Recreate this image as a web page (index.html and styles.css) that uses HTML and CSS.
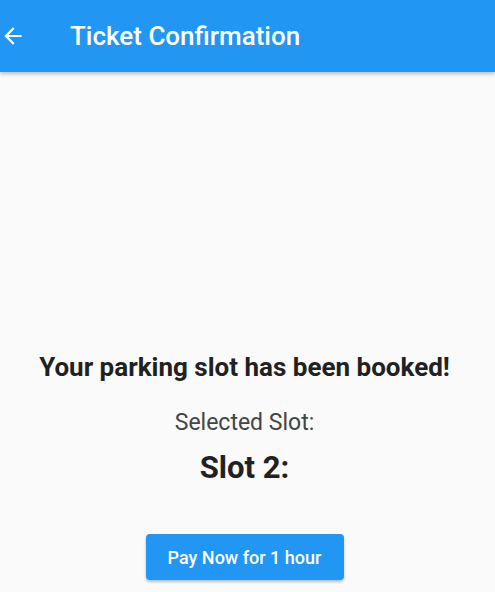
FILE: index.html
```html
<!DOCTYPE html>
<html>
<head>
<meta charset="utf-8">
<link rel="stylesheet" href="styles.css">
</head>
<body>
<header class="appbar">
  <svg class="back" viewBox="0 0 24 24" width="26" height="26"><path d="M20 11H7.83l5.59-5.59L12 4l-8 8 8 8 1.41-1.41L7.83 13H20v-2z" fill="#fff"/></svg>
  <h1 class="title">Ticket Confirmation</h1>
</header>
<main class="content">
  <h2 class="headline">Your parking slot has been booked!</h2>
  <p class="label">Selected Slot:</p>
  <p class="slot">Slot 2:</p>
  <button class="pay">Pay Now for 1 hour</button>
</main>
</body>
</html>
```
FILE: styles.css
```css
html, body {
  margin: 0;
  padding: 0;
  background: #fafafa;
  font-family: Roboto, "Noto Sans", sans-serif;
  width: 495px;
  height: 592px;
  overflow: hidden;
}
.appbar {
  height: 72px;
  background: #2196f3;
  display: flex;
  align-items: center;
  box-shadow: 0 2px 4px rgba(0,0,0,0.25);
  color: #fff;
}
.back {
  margin-left: 0px;
  margin-right: 44px;
}
.title {
  margin: 0;
  font-size: 26px;
  font-weight: 500;
}
.content {
  display: flex;
  flex-direction: column;
  align-items: center;
  padding-top: 279px;
  padding-right: 6px;
}
.headline {
  margin: 0;
  font-size: 26px;
  font-weight: 700;
  color: #212121;
  line-height: 32px;
}
.label {
  margin: 28px 0 0;
  font-size: 23px;
  color: #444;
  line-height: 24px;
}
.slot {
  margin: 13px 0 0;
  font-size: 31px;
  font-weight: 700;
  color: #212121;
  line-height: 40px;
}
.pay {
  margin-top: 46px;
  width: 198px;
  height: 46px;
  border: none;
  border-radius: 4px;
  background: #2196f3;
  color: #fff;
  font-family: Roboto, sans-serif;
  font-size: 18px;
  font-weight: 500;
  box-shadow: 0 2px 3px rgba(0,0,0,0.25);
}
```
